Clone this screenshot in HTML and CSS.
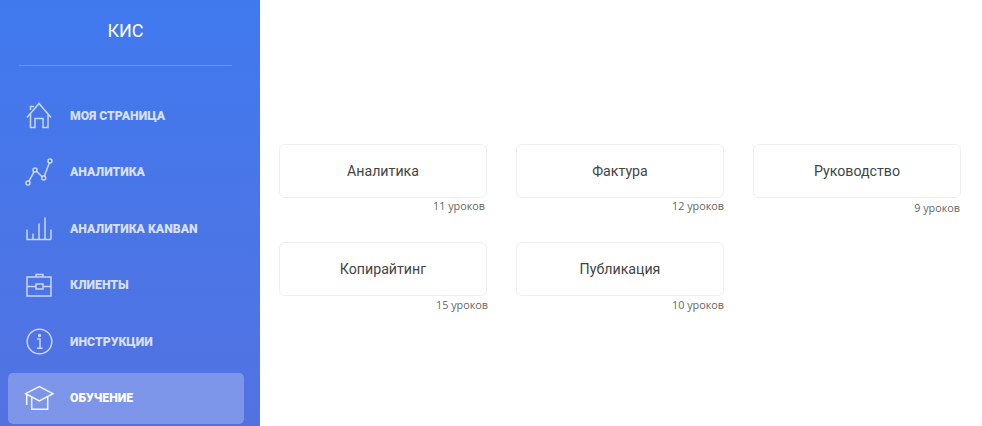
FILE: index.html
```html
<!DOCTYPE html>
<html lang="ru">

<head>
    <meta charset="UTF-8">
    <title>КИС</title>
    <link rel="stylesheet" href="styles.css">
</head>

<body>
    <div class="layout">
        <aside class="sidebar">
            <div class="logo">КИС</div>
            <nav class="menu">
                <a class="menu-item" href="#">
                    <svg class="menu-icon" viewBox="0 0 31 31">
                        <path d="M3 17.5 15 3.500l12 14M6.500 14v13.500H11V18.500h8v9h5V14M6.500 10V6.500H10" />
                    </svg>
                    <span>Моя страница</span>
                </a>
                <a class="menu-item" href="#">
                    <svg class="menu-icon" viewBox="0 0 31 31">
                        <circle cx="4" cy="26" r="2" />
                        <circle cx="11" cy="13" r="2" />
                        <circle cx="19.7" cy="21" r="2" />
                        <circle cx="26" cy="4" r="2" />
                        <path d="M5 24.200 10 14.800M12.500 14.300l5.700 5.400M20.400 19.100 25.300 5.900" />
                    </svg>
                    <span>Аналитика</span>
                </a>
                <a class="menu-item" href="#">
                    <svg class="menu-icon" viewBox="0 0 31 31">
                        <path d="M3 16.500v10h24M9 26.500v-6M15 26.500v-16M21 26.500v-22M27 26.500v-10" />
                    </svg>
                    <span>Аналитика Kanban</span>
                </a>
                <a class="menu-item" href="#">
                    <svg class="menu-icon" viewBox="0 0 31 31">
                        <path d="M3 7h24v19H3zM3 16.500h9M19 16.500h8M12 14h7v5h-7zM12 7V4.500h7V7" />
                    </svg>
                    <span>Клиенты</span>
                </a>
                <a class="menu-item" href="#">
                    <svg class="menu-icon" viewBox="0 0 31 31">
                        <circle cx="15.500" cy="15.500" r="12.300" />
                        <circle cx="15.500" cy="9.500" r="0.900" />
                        <path d="M13 13h3v9M13 22.200h5.500" />
                    </svg>
                    <span>Инструкции</span>
                </a>
                <a class="menu-item active" href="#">
                    <svg class="menu-icon" viewBox="0 0 31 31">
                        <path d="M1.700 10.700 15.300 3.700 29 10.700 15.300 18zM2.700 11v11M7.700 13.500v12.800h16V13.500" />
                    </svg>
                    <span>Обучение</span>
                </a>
            </nav>
        </aside>

        <main class="content">
            <div class="courses">
                <div class="course">
                    <a class="course-card" href="#">Аналитика</a>
                    <div class="course-count shift-left raised">11 уроков</div>
                </div>
                <div class="course">
                    <a class="course-card" href="#">Фактура</a>
                    <div class="course-count raised">12 уроков</div>
                </div>
                <div class="course">
                    <a class="course-card" href="#">Руководство</a>
                    <div class="course-count lower">9 уроков</div>
                </div>
                <div class="course">
                    <a class="course-card" href="#">Копирайтинг</a>
                    <div class="course-count shift-right">15 уроков</div>
                </div>
                <div class="course">
                    <a class="course-card" href="#">Публикация</a>
                    <div class="course-count">10 уроков</div>
                </div>
            </div>
        </main>
    </div>
</body>

</html>
```

FILE: styles.css
```css
html,
body {
    height: 100%;
}

body {
    margin: 0;
    font-family: Roboto, "Liberation Sans", sans-serif;
    background-color: #fff;
    overflow: hidden;
}

a {
    text-decoration: none;
}

.layout {
    display: flex;
    height: 426px;
}

.sidebar {
    width: 260px;
    flex-shrink: 0;
    padding: 0 16px 0 8px;
    box-sizing: border-box;
    background: linear-gradient(180deg, #4079ee 0%, #5372e1 100%);
}

.logo {
    margin: 0 12px 0 11px;
    height: 65px;
    line-height: 62px;
    text-align: center;
    color: #fff;
    font-size: 18px;
    border-bottom: 1px solid rgba(255, 255, 255, 0.2);
}

.menu {
    display: flex;
    flex-direction: column;
    gap: 5.5px;
    padding-top: 24px;
}

.menu-item {
    display: flex;
    align-items: center;
    gap: 15px;
    height: 51px;
    padding-left: 16px;
    border-radius: 5px;
    color: rgba(255, 255, 255, 0.78);
    font-size: 12.25px;
    font-weight: 900;
    text-transform: uppercase;
}

.menu-item.active {
    background-color: rgba(255, 255, 255, 0.25);
    color: #fff;
}

.menu-icon {
    width: 31px;
    height: 31px;
    flex-shrink: 0;
    fill: none;
    stroke: rgba(255, 255, 255, 0.7);
    stroke-width: 1.5;
}

.active .menu-icon {
    stroke: rgba(255, 255, 255, 0.9);
}

.content {
    flex: 1;
    padding: 144px 0 0 19px;
}

.courses {
    display: grid;
    grid-template-columns: repeat(3, 208px);
    grid-auto-rows: 98px;
    column-gap: 29px;
}

.course-card {
    display: flex;
    align-items: center;
    justify-content: center;
    height: 54px;
    box-sizing: border-box;
    border: 1px solid #eee;
    border-radius: 6px;
    color: #444;
    font-size: 14.2px;
}

.course-count {
    margin-top: 1px;
    text-align: right;
    color: #666;
    font-family: "Open Sans", sans-serif;
    font-size: 10.8px;
    line-height: 15px;
}

.course-count.raised {
    margin-top: 0;
}

.course-count.shift-left {
    margin-right: 2px;
}

.course-count.shift-right {
    margin-right: -1px;
}

.course-count.lower {
    margin-top: 2px;
    margin-right: 1px;
}
```
